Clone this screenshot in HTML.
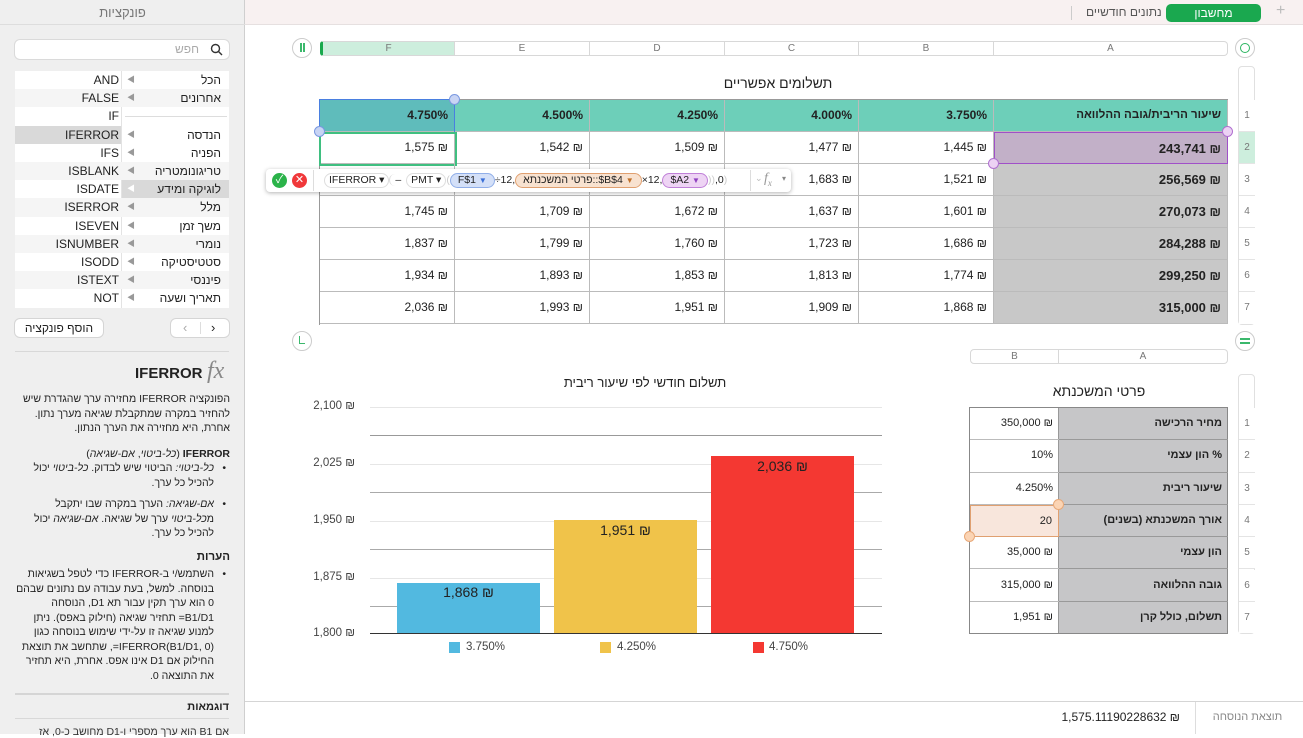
<!DOCTYPE html>
<html><head><meta charset="utf-8">
<style>
*{box-sizing:border-box;margin:0;padding:0}
body{width:1303px;height:734px;overflow:hidden;position:relative;background:#fff;font-family:"Liberation Sans","Noto Sans CJK SC",sans-serif;color:#222;font-size:12px}
.a{position:absolute}
.he{direction:rtl}
.n,.cell:not(.he),.c2:not(.he),.yl{unicode-bidi:bidi-override;direction:ltr}
.side{left:0;top:0;width:245px;height:734px;background:#efefef;border-right:1px solid #cfcfcf}
.lrow{position:absolute;left:15px;width:214px;height:18.2px;font-size:12px;line-height:18px}
.lrow .fn{position:absolute;left:0;width:106px;text-align:right;padding-right:2px}
.lrow .ct{position:absolute;left:107px;width:107px;text-align:right;padding-right:8px;direction:rtl}
.lrow .ar{position:absolute;left:112px;color:#999;font-size:8px}
.col{position:absolute;top:41px;height:15px;border:1px solid #d8d8d8;border-left:none;font-size:10px;color:#777;text-align:center;line-height:13px;background:#fff}
.cell{position:absolute;height:32px;border-right:1px solid #bbb;border-bottom:1px solid #bbb;text-align:right;padding-right:6px;line-height:31px;font-size:12px}
.rn{position:absolute;left:1239px;width:16px;font-size:10px;color:#777;text-align:center;border-bottom:1px solid #e4e4e4;background:#fff}
.pill{display:inline-block;height:15px;line-height:13px;border-radius:8px;padding:0 4px;font-size:10.5px;border:1px solid #ddd;vertical-align:middle}
.c2{position:absolute;height:32.3px;border-bottom:1px solid #999;text-align:right;padding-right:6px;line-height:31px;font-size:11px}
.grid{position:absolute;left:370px;width:512px;height:0}
.yl{position:absolute;left:300px;width:55px;text-align:right;font-size:11.5px;color:#444}
.txt p{margin:0}
.iso{unicode-bidi:isolate;direction:rtl}
</style></head><body>

<div class="a side">
 <div class="a" style="left:0;top:0;width:245px;height:25px;border-bottom:1px solid #ddd;text-align:center;line-height:25px;color:#777;font-size:13px">פונקציות</div>
 <div class="a" style="left:15px;top:40px;width:214px;height:19px;background:#fff;border-radius:5px;box-shadow:0 0 0 1px #dadada;direction:rtl;padding-right:30px;line-height:19px;color:#aaa;font-size:12px">חפש</div>
 <svg class="a" style="left:210px;top:43px" width="13" height="13" viewBox="0 0 13 13"><circle cx="5.5" cy="5.5" r="4" fill="none" stroke="#333" stroke-width="1.4"/><line x1="8.5" y1="8.5" x2="12" y2="12" stroke="#333" stroke-width="1.4"/></svg>
 <div class="a" style="left:15px;top:71px;width:214px;height:237px;background:#fff"></div>
 <div class="a" style="left:121px;top:71px;width:1px;height:237px;background:#e3e3e3"></div>
 <div class="lrow" style="top:71px"><span class="fn">AND</span><span class="ar">◀</span><span class="ct">הכל</span></div>
 <div class="lrow" style="top:89.2px;background:#f5f5f5"><span class="fn">FALSE</span><span class="ar">◀</span><span class="ct">אחרונים</span></div>
 <div class="lrow" style="top:107.4px"><span class="fn">IF</span><span class="a" style="left:110px;top:9px;width:102px;height:1px;background:#ddd"></span></div>
 <div class="lrow" style="top:125.6px"><span class="fn" style="background:#d9d9d9;height:18px">IFERROR</span><span class="ar">◀</span><span class="ct">הנדסה</span></div>
 <div class="lrow" style="top:143.8px"><span class="fn">IFS</span><span class="ar">◀</span><span class="ct">הפניה</span></div>
 <div class="lrow" style="top:162px;background:#f5f5f5"><span class="fn">ISBLANK</span><span class="ar">◀</span><span class="ct">טריגונומטריה</span></div>
 <div class="lrow" style="top:180.2px"><span class="fn">ISDATE</span><span class="ct" style="background:#d9d9d9;height:18px">לוגיקה ומידע</span><span class="ar" style="color:#fff">◀</span></div>
 <div class="lrow" style="top:198.4px;background:#f5f5f5"><span class="fn">ISERROR</span><span class="ar">◀</span><span class="ct">מלל</span></div>
 <div class="lrow" style="top:216.6px"><span class="fn">ISEVEN</span><span class="ar">◀</span><span class="ct">משך זמן</span></div>
 <div class="lrow" style="top:234.8px;background:#f5f5f5"><span class="fn">ISNUMBER</span><span class="ar">◀</span><span class="ct">נומרי</span></div>
 <div class="lrow" style="top:253px"><span class="fn">ISODD</span><span class="ar">◀</span><span class="ct">סטטיסטיקה</span></div>
 <div class="lrow" style="top:271.2px;background:#f5f5f5"><span class="fn">ISTEXT</span><span class="ar">◀</span><span class="ct">פיננסי</span></div>
 <div class="lrow" style="top:289.4px"><span class="fn">NOT</span><span class="ar">◀</span><span class="ct">תאריך ושעה</span></div>
 <div class="a" style="left:15px;top:319px;width:88px;height:18px;background:#fff;border-radius:5px;box-shadow:0 0 0 1px #d5d5d5;text-align:center;line-height:18px;font-size:12px;direction:rtl">הוסף פונקציה</div>
 <div class="a" style="left:171px;top:319px;width:58px;height:18px;background:#fff;border-radius:5px;box-shadow:0 0 0 1px #d5d5d5;font-size:13px;line-height:17px;color:#aaa"><span style="position:absolute;left:12px">‹</span><span style="position:absolute;left:29px;top:3px;width:1px;height:12px;background:#ddd"></span><span style="position:absolute;left:40px;color:#222">›</span></div>
 <div class="a" style="left:15px;top:351px;width:214px;height:1px;background:#d8d8d8"></div>
 <div class="a" style="left:135px;top:365px;font-weight:bold;font-size:15px">IFERROR</div>
 <div class="a" style="left:207px;top:358px;font-family:'Liberation Serif',serif;font-style:italic;font-size:24px;color:#888">fx</div>
 <div class="a he txt" style="left:14px;top:392px;width:216px;font-size:10.5px;line-height:14.5px;color:#222">
  <p>הפונקציה IFERROR מחזירה ערך שהגדרת שיש להחזיר במקרה שמתקבלת שגיאה מערך נתון. אחרת, היא מחזירה את הערך הנתון.</p>
  <p style="margin-top:11px"><b>IFERROR</b> (<i>כל-ביטוי</i>, <i>אם-שגיאה</i>)</p>
  <p style="padding-right:16px;position:relative"><span style="position:absolute;right:4px">•</span><i>כל-ביטוי:</i> הביטוי שיש לבדוק. <i>כל-ביטוי</i> יכול להכיל כל ערך.</p>
  <p style="padding-right:16px;position:relative;margin-top:7px"><span style="position:absolute;right:4px">•</span><i>אם-שגיאה:</i> הערך במקרה שבו יתקבל מ<i>כל-ביטוי</i> ערך של שגיאה. <i>אם-שגיאה</i> יכול להכיל כל ערך.</p>
  <p style="margin-top:9px;font-weight:bold;font-size:11.5px">הערות</p>
  <p style="padding-right:16px;position:relative;margin-top:3px"><span style="position:absolute;right:4px">•</span>השתמש/י ב-IFERROR כדי לטפל בשגיאות בנוסחה. למשל, בעת עבודה עם נתונים שבהם 0 הוא ערך תקין עבור תא D1, הנוסחה ‎=B1/D1 תחזיר שגיאה (חילוק באפס). ניתן למנוע שגיאה זו על-ידי שימוש בנוסחה כגון ‎=IFERROR(B1/D1, 0)‎, שתחשב את תוצאת החילוק אם D1 אינו אפס. אחרת, היא תחזיר את התוצאה 0.</p>
 </div>
 <div class="a" style="left:15px;top:693px;width:214px;height:2px;background:#d5d5d5"></div>
 <div class="a he" style="left:15px;top:701px;width:214px;font-weight:bold;font-size:11px">דוגמאות</div>
 <div class="a" style="left:15px;top:718px;width:214px;height:1px;background:#d8d8d8"></div>
 <div class="a he" style="left:15px;top:726px;width:214px;font-size:10.5px;color:#333">אם B1 הוא ערך מספרי ו-D1 מחושב כ-0, אז</div>
</div>

<div class="a" style="left:245px;top:0;width:1058px;height:25px;background:#f8f1f1;border-bottom:1px solid #e6e0e0"></div>
<div class="a" style="left:1166px;top:4px;width:95px;height:18px;background:#1aa84f;border-radius:5px;color:#fff;text-align:center;line-height:18px;font-size:12px">מחשבון</div>
<div class="a" style="left:1086px;top:5px;font-size:12px;color:#555;direction:rtl">נתונים חודשיים</div>
<div class="a" style="left:1071px;top:6px;width:1px;height:14px;background:#ccc"></div>
<div class="a" style="left:1276px;top:2px;font-size:16px;color:#bbb">+</div>

<div class="a" style="left:292px;top:38px;width:20px;height:20px;border-radius:50%;border:1px solid #ccc;background:#fff"></div>
<div class="a" style="left:300px;top:43px;width:1.5px;height:9px;background:#3bb86c"></div>
<div class="a" style="left:303px;top:43px;width:1.5px;height:9px;background:#3bb86c"></div>
<div class="a" style="left:1235px;top:38px;width:20px;height:20px;border-radius:50%;border:1px solid #ccc;background:#fff"></div>
<div class="a" style="left:1240px;top:43px;width:10px;height:10px;border-radius:50%;border:1.5px solid #2bb560"></div>
<div class="col" style="left:320px;width:135px;background:#cdeedd;border-left:3px solid #18a84c;border-radius:3px 0 0 3px">F</div>
<div class="col" style="left:455px;width:135px">E</div>
<div class="col" style="left:590px;width:135px">D</div>
<div class="col" style="left:725px;width:134px">C</div>
<div class="col" style="left:859px;width:135px">B</div>
<div class="col" style="left:994px;width:234px;border-radius:0 4px 4px 0">A</div>

<div class="a he" style="left:600px;top:75px;width:356px;text-align:center;font-size:14px">תשלומים אפשריים</div>

<div class="a" style="left:1238px;top:66px;width:17px;height:259px;border:1px solid #e0e0e0;border-radius:4px;background:#fff"></div>
<div class="rn" style="top:100px;height:32px;line-height:32px">1</div>
<div class="rn" style="top:132px;height:32px;line-height:32px;background:#cdeedd">2</div>
<div class="rn" style="top:164px;height:32px;line-height:32px">3</div>
<div class="rn" style="top:196px;height:32px;line-height:32px">4</div>
<div class="rn" style="top:228px;height:32px;line-height:32px">5</div>
<div class="rn" style="top:260px;height:32px;line-height:32px">6</div>
<div class="rn" style="top:292px;height:32px;line-height:32px;border:none">7</div>

<div class="a" style="left:319px;top:99px;width:909px;height:226px;border:1px solid #999;border-right:none;border-bottom:none"></div>
<div class="cell" style="left:320px;top:100px;width:135px;background:#5fbcbb;font-weight:bold">4.750%</div>
<div class="cell" style="left:455px;top:100px;width:135px;background:#6dcfb9;font-weight:bold">4.500%</div>
<div class="cell" style="left:590px;top:100px;width:135px;background:#6dcfb9;font-weight:bold">4.250%</div>
<div class="cell" style="left:725px;top:100px;width:134px;background:#6dcfb9;font-weight:bold">4.000%</div>
<div class="cell" style="left:859px;top:100px;width:135px;background:#6dcfb9;font-weight:bold">3.750%</div>
<div class="cell he" style="left:994px;top:100px;width:234px;background:#6dcfb9;font-weight:bold;text-align:right;padding-right:6px;font-size:11.5px">שיעור הריבית/גובה ההלוואה</div>
<div class="a" style="left:319px;top:99px;width:136px;height:34px;border:1.5px solid #4a7fe0"></div>

<div class="cell" style="left:320px;top:132px;width:135px">1,575 ₪</div>
<div class="cell" style="left:455px;top:132px;width:135px">1,542 ₪</div>
<div class="cell" style="left:590px;top:132px;width:135px">1,509 ₪</div>
<div class="cell" style="left:725px;top:132px;width:134px">1,477 ₪</div>
<div class="cell" style="left:859px;top:132px;width:135px">1,445 ₪</div>
<div class="cell" style="left:994px;top:132px;width:234px;background:#c2b0c8;font-weight:bold;font-size:13px;border:1.5px solid #a050c8">243,741 ₪</div>
<div class="a" style="left:319px;top:132px;width:138px;height:34px;border:2px solid #3fbf80"></div>

<div class="cell" style="left:320px;top:164px;width:135px"></div>
<div class="cell" style="left:455px;top:164px;width:135px">1,616 ₪</div>
<div class="cell" style="left:590px;top:164px;width:135px">1,649 ₪</div>
<div class="cell" style="left:725px;top:164px;width:134px">1,683 ₪</div>
<div class="cell" style="left:859px;top:164px;width:135px">1,521 ₪</div>
<div class="cell" style="left:994px;top:164px;width:234px;background:#c8c8c8;font-weight:bold;font-size:13px">256,569 ₪</div>

<div class="cell" style="left:320px;top:196px;width:135px">1,745 ₪</div>
<div class="cell" style="left:455px;top:196px;width:135px">1,709 ₪</div>
<div class="cell" style="left:590px;top:196px;width:135px">1,672 ₪</div>
<div class="cell" style="left:725px;top:196px;width:134px">1,637 ₪</div>
<div class="cell" style="left:859px;top:196px;width:135px">1,601 ₪</div>
<div class="cell" style="left:994px;top:196px;width:234px;background:#c8c8c8;font-weight:bold;font-size:13px">270,073 ₪</div>

<div class="cell" style="left:320px;top:228px;width:135px">1,837 ₪</div>
<div class="cell" style="left:455px;top:228px;width:135px">1,799 ₪</div>
<div class="cell" style="left:590px;top:228px;width:135px">1,760 ₪</div>
<div class="cell" style="left:725px;top:228px;width:134px">1,723 ₪</div>
<div class="cell" style="left:859px;top:228px;width:135px">1,686 ₪</div>
<div class="cell" style="left:994px;top:228px;width:234px;background:#c8c8c8;font-weight:bold;font-size:13px">284,288 ₪</div>

<div class="cell" style="left:320px;top:260px;width:135px">1,934 ₪</div>
<div class="cell" style="left:455px;top:260px;width:135px">1,893 ₪</div>
<div class="cell" style="left:590px;top:260px;width:135px">1,853 ₪</div>
<div class="cell" style="left:725px;top:260px;width:134px">1,813 ₪</div>
<div class="cell" style="left:859px;top:260px;width:135px">1,774 ₪</div>
<div class="cell" style="left:994px;top:260px;width:234px;background:#c8c8c8;font-weight:bold;font-size:13px">299,250 ₪</div>

<div class="cell" style="left:320px;top:292px;width:135px">2,036 ₪</div>
<div class="cell" style="left:455px;top:292px;width:135px">1,993 ₪</div>
<div class="cell" style="left:590px;top:292px;width:135px">1,951 ₪</div>
<div class="cell" style="left:725px;top:292px;width:134px">1,909 ₪</div>
<div class="cell" style="left:859px;top:292px;width:135px">1,868 ₪</div>
<div class="cell" style="left:994px;top:292px;width:234px;background:#c8c8c8;font-weight:bold;font-size:13px">315,000 ₪</div>

<div class="a" style="left:449px;top:94px;width:11px;height:11px;border-radius:50%;background:#c8d4f4;border:1px solid #7a98e0"></div>
<div class="a" style="left:314px;top:126px;width:11px;height:11px;border-radius:50%;background:#c8d4f4;border:1px solid #7a98e0"></div>
<div class="a" style="left:1222px;top:126px;width:11px;height:11px;border-radius:50%;background:#ecd2f4;border:1px solid #b070d0"></div>
<div class="a" style="left:988px;top:158px;width:11px;height:11px;border-radius:50%;background:#ecd2f4;border:1px solid #b070d0"></div>

<!-- formula bar -->
<div class="a" style="left:266px;top:169px;width:525px;height:23px;background:#fff;border-radius:4px;box-shadow:0 1px 4px rgba(0,0,0,.3)"></div>
<div class="a" style="left:272px;top:173px;width:15px;height:15px;border-radius:50%;background:#2bb34a;color:#fff;font-size:11px;text-align:center;line-height:15px">✓</div>
<div class="a" style="left:292px;top:173px;width:15px;height:15px;border-radius:50%;background:#f0383a;color:#fff;font-size:11px;text-align:center;line-height:15px">✕</div>
<div class="a" style="left:313px;top:170px;width:1px;height:21px;background:#ddd"></div>
<div class="a n" style="left:324px;top:172px;white-space:nowrap;font-size:10.5px;line-height:17px">
 <span class="pill">IFERROR ▾</span><span style="border-left:1px solid #ddd;border-radius:8px;padding:0 2px"> – </span><span class="pill">PMT ▾</span><span style="color:#ccc">(</span><span class="pill" style="background:#d4e0f8;border-color:#90aee8;padding:0 7px">F$1 <span style="color:#3a6fd8;font-size:8px">▼</span></span>÷12,<span class="pill" style="background:#f8e2d0;border-color:#e0a070;padding:0 7px"><span class="iso">פרטי המשכנתא</span>::$B$4 <span style="color:#c0702a;font-size:8px">▼</span></span>×12,<span class="pill" style="background:#eed4f4;border-color:#c080d8;padding:0 7px">$A2 <span style="color:#9040c0;font-size:8px">▼</span></span><span style="color:#ccc">))</span>,0<span style="color:#ccc">)</span>
</div>
<div class="a" style="left:750px;top:170px;width:1px;height:21px;background:#ddd"></div>
<div class="a" style="left:755px;top:173px;font-size:9px;color:#bbb">⌄</div>
<div class="a" style="left:764px;top:171px;font-family:'Liberation Serif',serif;font-style:italic;font-size:14px;color:#999">f<sub style="font-size:9px">x</sub></div>
<div class="a" style="left:782px;top:174px;font-size:8px;color:#888">▾</div>

<div class="a" style="left:292px;top:331px;width:20px;height:20px;border-radius:50%;border:1px solid #ccc;background:#fff"></div>
<div class="a" style="left:299px;top:336px;width:6px;height:8px;border-left:1.5px solid #3bb86c;border-bottom:1.5px solid #3bb86c"></div>
<div class="a" style="left:1235px;top:331px;width:20px;height:20px;border-radius:50%;border:1px solid #ccc;background:#fff"></div>
<div class="a" style="left:1240px;top:338px;width:10px;height:1.5px;background:#3bb86c"></div>
<div class="a" style="left:1240px;top:342px;width:10px;height:1.5px;background:#3bb86c"></div>

<div class="col" style="left:970px;top:349px;width:89px;border-left:1px solid #d8d8d8;border-radius:4px 0 0 4px">B</div>
<div class="col" style="left:1059px;top:349px;width:169px;border-radius:0 4px 4px 0">A</div>
<div class="a he" style="left:970px;top:383px;width:258px;text-align:center;font-size:14px">פרטי המשכנתא</div>
<div class="a" style="left:1238px;top:374px;width:17px;height:260px;border:1px solid #e0e0e0;border-radius:4px;background:#fff"></div>
<div class="a" style="left:969px;top:407px;width:259px;height:227px;border:1px solid #888;background:#c6c6c8"></div>
<div class="a" style="left:970px;top:408px;width:89px;height:225px;background:#fff"></div>
<div class="a" style="left:1058px;top:408px;width:1px;height:225px;background:#999"></div>

<div class="rn" style="top:408px;height:32.3px;line-height:32px">1</div>
<div class="rn" style="top:440.3px;height:32.3px;line-height:32px">2</div>
<div class="rn" style="top:472.6px;height:32.3px;line-height:32px">3</div>
<div class="rn" style="top:504.9px;height:32.3px;line-height:32px">4</div>
<div class="rn" style="top:537.2px;height:32.3px;line-height:32px">5</div>
<div class="rn" style="top:569.5px;height:32.3px;line-height:32px">6</div>
<div class="rn" style="top:601.8px;height:31px;line-height:32px;border:none">7</div>

<div class="c2" style="left:970px;top:408px;width:89px;border-color:#bbb">350,000 ₪</div>
<div class="c2 he" style="left:1059px;top:408px;width:169px;font-weight:bold">מחיר הרכישה</div>
<div class="c2" style="left:970px;top:440.3px;width:89px;border-color:#bbb">10%</div>
<div class="c2 he" style="left:1059px;top:440.3px;width:169px;font-weight:bold">% הון עצמי</div>
<div class="c2" style="left:970px;top:472.6px;width:89px;border-color:#bbb">4.250%</div>
<div class="c2 he" style="left:1059px;top:472.6px;width:169px;font-weight:bold">שיעור ריבית</div>
<div class="c2" style="left:970px;top:504.9px;width:89px;background:#f8e6dc;border:1.5px solid #e0a070">20</div>
<div class="c2 he" style="left:1059px;top:504.9px;width:169px;font-weight:bold">אורך המשכנתא (בשנים)</div>
<div class="c2" style="left:970px;top:537.2px;width:89px;border-color:#bbb">35,000 ₪</div>
<div class="c2 he" style="left:1059px;top:537.2px;width:169px;font-weight:bold">הון עצמי</div>
<div class="c2" style="left:970px;top:569.5px;width:89px;border-color:#bbb">315,000 ₪</div>
<div class="c2 he" style="left:1059px;top:569.5px;width:169px;font-weight:bold">גובה ההלוואה</div>
<div class="c2" style="left:970px;top:601.8px;width:89px;border:none">1,951 ₪</div>
<div class="c2 he" style="left:1059px;top:601.8px;width:169px;font-weight:bold;border:none">תשלום, כולל קרן</div>
<div class="a" style="left:1053px;top:499px;width:11px;height:11px;border-radius:50%;background:#fbd4b4;border:1px solid #e8a878"></div>
<div class="a" style="left:964px;top:531px;width:11px;height:11px;border-radius:50%;background:#fbd4b4;border:1px solid #e8a878"></div>

<div class="a he" style="left:500px;top:375px;width:290px;text-align:center;font-size:13px">תשלום חודשי לפי שיעור ריבית</div>
<div class="grid" style="top:407px;border-top:1px solid #e6e6e6"></div>
<div class="grid" style="top:435px;border-top:1.5px solid #999"></div>
<div class="grid" style="top:464px;border-top:1px solid #e6e6e6"></div>
<div class="grid" style="top:492px;border-top:1px solid #aaa"></div>
<div class="grid" style="top:521px;border-top:1px solid #e6e6e6"></div>
<div class="grid" style="top:549px;border-top:1px solid #aaa"></div>
<div class="grid" style="top:578px;border-top:1px solid #e6e6e6"></div>
<div class="grid" style="top:606px;border-top:1px solid #aaa"></div>
<div class="yl" style="top:400px">2,100 ₪</div>
<div class="yl" style="top:457px">2,025 ₪</div>
<div class="yl" style="top:514px">1,950 ₪</div>
<div class="yl" style="top:571px">1,875 ₪</div>
<div class="yl" style="top:627px">1,800 ₪</div>
<div class="a n" style="left:397px;top:583px;width:143px;height:51px;background:#52b9e0;text-align:center;font-size:14px;padding-top:1px">1,868 ₪</div>
<div class="a n" style="left:554px;top:520px;width:143px;height:114px;background:#f0c34a;text-align:center;font-size:14px;padding-top:2px">1,951 ₪</div>
<div class="a n" style="left:711px;top:456px;width:143px;height:178px;background:#f43832;text-align:center;font-size:14px;padding-top:2px">2,036 ₪</div>
<div class="grid" style="top:633px;border-top:1.5px solid #333"></div>
<div class="a" style="left:449px;top:642px;width:11px;height:11px;background:#52b9e0"></div>
<div class="a" style="left:466px;top:641px;font-size:11.5px;color:#444">3.750%</div>
<div class="a" style="left:600px;top:642px;width:11px;height:11px;background:#f0c34a"></div>
<div class="a" style="left:617px;top:641px;font-size:11.5px;color:#444">4.250%</div>
<div class="a" style="left:753px;top:642px;width:11px;height:11px;background:#f43832"></div>
<div class="a" style="left:769px;top:641px;font-size:11.5px;color:#444">4.750%</div>

<div class="a" style="left:245px;top:701px;width:1058px;height:33px;border-top:1px solid #d5d5d5;background:#fff"></div>
<div class="a" style="left:1195px;top:702px;width:1px;height:32px;background:#ddd"></div>
<div class="a he" style="left:1205px;top:711px;width:85px;text-align:center;font-size:11px;color:#888">תוצאת הנוסחה</div>
<div class="a n" style="left:1040px;top:710px;width:140px;text-align:right;font-size:12px">1,575.11190228632 ₪</div>
</body></html>
